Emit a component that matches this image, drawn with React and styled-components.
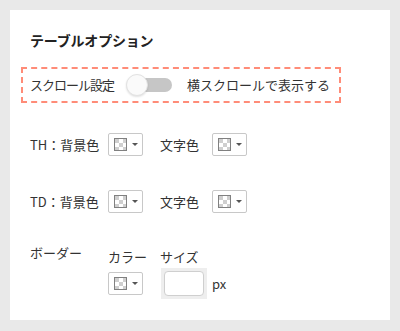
import React from 'react';
import styled, { createGlobalStyle } from 'styled-components';

const GlobalStyles = createGlobalStyle`
	html, body {
		margin: 0;
		padding: 0;
		background: #e9e9e9;
	}
	body {
		font-family: 'Noto Sans CJK JP', 'Noto Sans', sans-serif;
		color: #333;
	}
`;

const Swatch = () => (
	<PickerButton type='button'>
		<svg width='13' height='13' viewBox='0 0 13 13'>
			<rect x='0.5' y='0.5' width='12' height='12' fill='#fff' stroke='#808080' />
			<rect x='1' y='1' width='4' height='4' fill='#cfcfcf' />
			<rect x='9' y='1' width='3' height='4' fill='#cfcfcf' />
			<rect x='5' y='5' width='4' height='4' fill='#cfcfcf' />
			<rect x='1' y='9' width='4' height='3' fill='#cfcfcf' />
			<rect x='9' y='9' width='3' height='3' fill='#cfcfcf' />
		</svg>
		<Caret />
	</PickerButton>
);

export default function App() {
	return (
		<>
			<GlobalStyles />
			<Card>
				<Title>テーブルオプション</Title>
				<ScrollBox>
					<ScrollLabel>スクロール設定</ScrollLabel>
					<Toggle>
						<Track />
						<Knob />
					</Toggle>
					<ToggleLabel>横スクロールで表示する</ToggleLabel>
				</ScrollBox>
				<ColorRow $top={30}>
					<Text>TH：背景色</Text>
					<Swatch />
					<SubLabel>文字色</SubLabel>
					<Swatch />
				</ColorRow>
				<ColorRow $top={34}>
					<Text>TD：背景色</Text>
					<Swatch />
					<SubLabel>文字色</SubLabel>
					<Swatch />
				</ColorRow>
				<BorderSection>
					<Text>ボーダー</Text>
					<BorderGrid>
						<Text>カラー</Text>
						<Text>サイズ</Text>
						<Swatch />
						<SizeField>
							<InputWrap>
								<SizeInput type='text' />
							</InputWrap>
							<Text>px</Text>
						</SizeField>
					</BorderGrid>
				</BorderSection>
			</Card>
		</>
	);
}

const Card = styled.div`
	box-sizing: border-box;
	margin: 10px;
	width: 380px;
	height: 310px;
	background: #fff;
	padding: 20px 20px;
	font-size: 13px;
`;

const Title = styled.h2`
	margin: 0;
	font-size: 14px;
	line-height: 20px;
	font-weight: bold;
	color: #222;
	letter-spacing: -0.2px;
`;

const Text = styled.span`
	white-space: nowrap;
	flex-shrink: 0;
`;

const ScrollLabel = styled(Text)`
	letter-spacing: -1px;
`;

const ScrollBox = styled.div`
	box-sizing: border-box;
	display: flex;
	align-items: center;
	margin: 17px 0 0 -9px;
	width: 320px;
	height: 36px;
	padding: 0 7px;
	border: 2px dashed #ff8c78;
	line-height: 18px;
`;

const Toggle = styled.div`
	position: relative;
	flex-shrink: 0;
	width: 46px;
	height: 22px;
	margin-left: 12px;
`;

const Track = styled.div`
	position: absolute;
	left: 2px;
	right: 0;
	top: 4px;
	height: 14px;
	border-radius: 7px;
	background: #c6c6c6;
`;

const Knob = styled.div`
	position: absolute;
	left: 0;
	top: 0;
	box-sizing: border-box;
	width: 22px;
	height: 22px;
	border-radius: 50%;
	background: #fafafa;
	border: 1px solid #e2e2e2;
	box-shadow: 0 1px 2px rgba(0, 0, 0, 0.12);
`;

const ToggleLabel = styled(Text)`
	margin-left: 15px;
`;

const ColorRow = styled.div`
	display: grid;
	grid-template-columns: 78px 35px 69px 35px;
	align-items: center;
	margin-top: ${p => p.$top}px;
	height: 23px;
	line-height: 18px;
`;

const SubLabel = styled(Text)`
	padding-left: 17px;
`;

const PickerButton = styled.button`
	box-sizing: border-box;
	display: flex;
	align-items: center;
	gap: 5px;
	width: 35px;
	height: 23px;
	padding: 0 0 0 5px;
	background: #fff;
	border: 1px solid #c8c8c8;
	border-radius: 2px;
	cursor: pointer;
`;

const Caret = styled.span`
	width: 0;
	height: 0;
	border-left: 3px solid transparent;
	border-right: 3px solid transparent;
	border-top: 3px solid #555;
`;

const BorderSection = styled.div`
	display: grid;
	grid-template-columns: 78px auto;
	align-items: start;
	margin-top: 31px;
	line-height: 18px;
`;

const BorderGrid = styled.div`
	display: grid;
	grid-template-columns: 52px auto;
	row-gap: 5px;
	align-items: center;
	margin-top: 4px;
`;

const SizeField = styled.div`
	display: flex;
	align-items: center;
	gap: 5px;
	margin: -3px 0;
`;

const InputWrap = styled.div`
	background: #eeeeee;
	padding: 3px;
	margin-left: 1px;
`;

const SizeInput = styled.input`
	box-sizing: border-box;
	display: block;
	width: 40px;
	height: 25px;
	border: 1px solid #cfcfcf;
	border-radius: 4px;
	background: #fff;
	outline: none;
`;
